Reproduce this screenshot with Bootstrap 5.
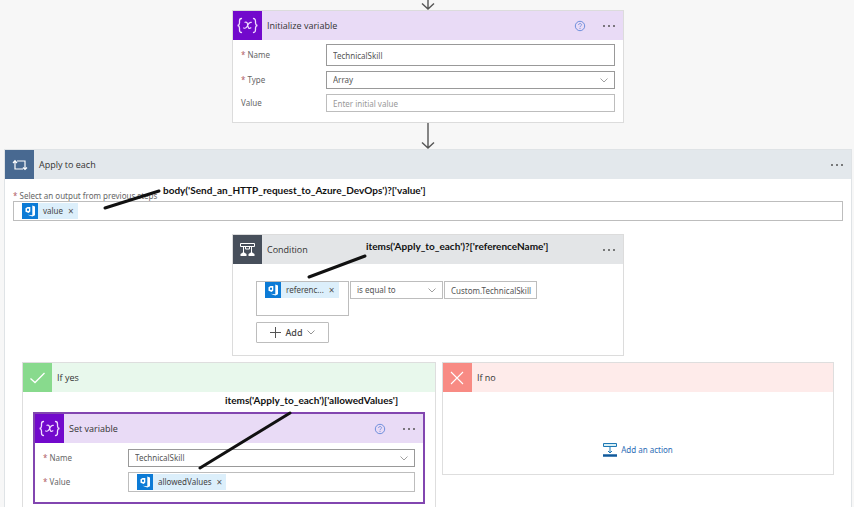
<!DOCTYPE html>
<html lang="en">
<head>
<meta charset="utf-8">
<meta name="viewport" content="width=device-width, initial-scale=1">
<title>Flow designer</title>
<link href="https://cdn.jsdelivr.net/npm/bootstrap@5.3.0/dist/css/bootstrap.min.css" rel="stylesheet">
<style>
body{background:#f7f7f7;font-family:"Noto Sans","Open Sans",sans-serif;font-size:8px;line-height:12px;color:#444;padding:0 2px 0 4px}
svg{display:block;flex:none}
.flow-card{width:100%;max-width:392px;background:#fff;border:1px solid #dcdcdc}
.flow-head{height:29px;font-family:"Open Sans","Noto Sans",sans-serif;font-size:9px;color:#333;padding-right:7px}
.flow-icon{width:29px;height:29px;margin-right:5px;display:flex;align-items:center;justify-content:center;flex:none;color:#fff}
.purple{background:#e9dbf6}.purple .flow-icon{background:#7209cc}
.scope-head{background:#e3e8ec}.scope-head .flow-icon{background:#486991}
.cond-head{background:#e3e5e7}.cond-head .flow-icon{background:#474f5b}
.yes-head{background:#e8f8ec}.yes-head .flow-icon{background:#88da8d}
.no-head{background:#feebea}.no-head .flow-icon{background:#f88b84}
.plain-btn{border:0;background:none;padding:0;color:#555}
.field-label{width:85px;flex:none;color:#666}
.req{color:#b06068}
.fields{display:flex;flex-direction:column;gap:5px;padding:4px 8px 10px}
.selected-card .fields{padding:6px 8px 10px}
.box{border:1px solid #bdbdbd;border-radius:0;background-color:#fff;font-size:8px;line-height:12px;color:#555;height:18px;padding:0 0 0 6px;min-width:0;width:100%}
.box::placeholder{color:#999;opacity:1}
.box.strong{border-color:#999}
.box.tall{height:22px}
select.box{appearance:none;background-image:url("data:image/svg+xml,%3Csvg xmlns='http://www.w3.org/2000/svg' viewBox='0 0 8 5'%3E%3Cpath d='M.5.5 4 4 7.5.5' fill='none' stroke='%23888' stroke-width='.8'/%3E%3C/svg%3E");background-repeat:no-repeat;background-size:8px 5px;background-position:right 6px center}
.token-box{display:flex;align-items:center;padding:0 0 0 8px;height:20px}
.token{display:flex;align-items:center;height:16px;background:#dceffb;color:#444;padding-right:4px;flex:none}
.token svg{margin-right:5px}
.token button{margin-left:5px;font-size:10px;line-height:12px}
.bare{border:0;outline:0;background:none;flex:1 1 0;min-width:0;width:0;padding:0}
.flow-scope{background:#fff;border:1px solid #dfe3e6;border-bottom:0}
.scope-body{padding:11px 8px 13px}
.scope-body label{line-height:11px;color:#666}
.cond-body{padding:17px 23px 12px}
.cond-row{display:flex;align-items:flex-start;gap:1px;margin-bottom:6px}
.cond-cell{width:93px;flex:none}
.cond-cell.token-box{height:35px;align-items:flex-start}
.add-btn{width:73px;height:21px;border:1px solid #bdbdbd;border-radius:1px;background:#fff;font-size:9px;font-weight:500;color:#444}
.branches{display:grid;grid-template-columns:415fr 393fr;gap:6px;padding:6px 17px 0}
.branch{border:1px solid #dedede;background:#fff}
.branch-yes{border-bottom:0;padding-bottom:3px}
.branch-no{height:113px}
.branch-space{padding:20px 10px 0}
.selected-card{max-width:none;border:2px solid #8246b0}
.note{position:absolute;font-family:Lato,"Open Sans",sans-serif;font-weight:700;font-size:10px;line-height:12px;color:#111;white-space:nowrap;z-index:2}
.note-line{position:absolute;z-index:2;pointer-events:none}
.note-source{left:158px;top:34px}.line-source{left:97px;top:37px}
.note-item{left:133px;top:5px}.line-item{left:73px;top:18px}
.note-allowed{left:190px;top:-20px}.line-allowed{left:162px;top:-4px}
.add-area{padding-top:34px}
.add-link{color:#2b6cb5;text-decoration:none}
</style>
<script src="https://cdn.jsdelivr.net/npm/bootstrap@5.3.0/dist/js/bootstrap.bundle.min.js"></script>
</head>
<body class="min-vh-100 d-flex flex-column">
<svg width="0" height="0" class="position-absolute" aria-hidden="true">
<symbol id="devops" viewBox="0 0 16 16"><path fill="#0c7bd6" d="M0 0h16v16H0z"/><path fill="#fff" d="M10.300 2.500 13 3.600v8.600l-2.700 1.300-4.800-1.700 4.800.400z"/><path d="M8.300 4v4.500L6.700 10 3.500 8.700V5.300L5.500 4z" fill="#fff"/><path d="M5 5.700h2v2H5z" fill="#0c7bd6"/></symbol>
<symbol id="dots" viewBox="0 0 14 4"><circle cx="2" cy="2" r="1"/><circle cx="7" cy="2" r="1"/><circle cx="12" cy="2" r="1"/></symbol>
<symbol id="help" viewBox="0 0 12 12"><circle cx="6" cy="6" r="4.700" fill="none" stroke="#6f8fdc"/><path d="M4.600 5c0-2 2.900-2 2.900-.2C7.500 5.900 6 5.900 6 7.200M6 8v1" fill="none" stroke="#6f8fdc" stroke-width=".9"/></symbol>
<symbol id="vari" viewBox="0 0 29 29"><path d="M8.500 7.500c-2 0-2 .8-2 2.500v2c0 1.500-.4 2.300-1.900 2.500 1.500.2 1.900 1 1.900 2.500v2c0 1.700 0 2.500 2 2.500M20.500 7.500c2 0 2 .8 2 2.500v2c0 1.500.4 2.300 1.900 2.500-1.500.2-1.900 1-1.900 2.500v2c0 1.700 0 2.500-2 2.500" fill="none" stroke="#f0ddff" stroke-width="1.300" stroke-linecap="round"/><path d="M12 11.300c2.200-.8 2.400 1.200 2.800 3.200s.9 4 3.100 2.300M18.300 11.400c-2-.7-3 1.500-3.700 3s-1.900 3.600-3.900 2.600" fill="none" stroke="#f0ddff" stroke-width="1.200" stroke-linecap="round"/></symbol>
</svg>

<svg class="mx-auto" width="14" height="10" viewBox="0 0 14 10" fill="none" stroke="#555" stroke-width="1.400" aria-hidden="true"><path d="M7 0v9M1 3.500 7 9l6-5.500"/></svg>

<section class="flow-card mx-auto">
  <header class="flow-head purple d-flex align-items-center">
    <span class="flow-icon"><svg width="29" height="29"><use href="#vari"/></svg></span><span class="flex-grow-1">Initialize variable</span>
    <button class="plain-btn me-3" aria-label="Help"><svg width="12" height="12"><use href="#help"/></svg></button>
    <button class="plain-btn" aria-label="More"><svg width="14" height="4" fill="currentColor"><use href="#dots"/></svg></button>
  </header>
  <div class="fields">
    <div class="d-flex align-items-center"><label class="field-label" for="n1"><span class="req">*</span> Name</label><input id="n1" class="box strong tall" value="TechnicalSkill"></div>
    <div class="d-flex align-items-center"><label class="field-label" for="t1"><span class="req">*</span> Type</label><select id="t1" class="box strong"><option>Array</option></select></div>
    <div class="d-flex align-items-center"><label class="field-label" for="v1">Value</label><input id="v1" class="box" placeholder="Enter initial value"></div>
  </div>
</section>

<svg class="mx-auto" width="14" height="26" viewBox="0 0 14 26" fill="none" stroke="#555" stroke-width="1.400" aria-hidden="true"><path d="M7 0v25M1 19.500 7 25l6-5.500"/></svg>

<main class="flow-scope flex-grow-1 d-flex flex-column position-relative">
  <header class="flow-head scope-head d-flex align-items-center">
    <span class="flow-icon"><svg width="16" height="14" viewBox="0 0 16 14" fill="none" stroke="#fff" stroke-width="1.200"><path d="M5 3h8v8M1 5l2-2.300L5 5M3 3v8h8M11 9.500l2 2 2-2"/></svg></span><span class="flex-grow-1">Apply to each</span>
    <button class="plain-btn" aria-label="More"><svg width="14" height="4" fill="currentColor"><use href="#dots"/></svg></button>
  </header>
  <span class="note note-source">body('Send_an_HTTP_request_to_Azure_DevOps')?['value']</span>
  <svg class="note-line line-source" width="60" height="24" aria-hidden="true"><path d="M3 21 57 4" stroke="#111" stroke-width="3" stroke-linecap="round"/></svg>
  <div class="scope-body">
    <label class="d-block" for="src"><span class="req">*</span> Select an output from previous steps</label>
    <div class="box token-box"><span class="token"><svg width="16" height="16"><use href="#devops"/></svg>value<button class="plain-btn" aria-label="Remove value">×</button></span><input id="src" class="bare"></div>
  </div>

  <section class="flow-card mx-auto position-relative">
    <header class="flow-head cond-head d-flex align-items-center">
      <span class="flow-icon"><svg width="17" height="17" viewBox="0 0 17 17" fill="none" stroke="#fff"><path d="M1.500 2.500h14v3h-14zM4.500 5.500v7M12.500 5.500v7M6.500 5.500v2.500h4V5.500"/><path d="M1.500 15v-2l3-2 3 2v2zM9.500 15v-2l3-2 3 2v2z" fill="#fff" stroke="none"/></svg></span><span class="flex-grow-1">Condition</span>
      <button class="plain-btn" aria-label="More"><svg width="14" height="4" fill="currentColor"><use href="#dots"/></svg></button>
    </header>
    <span class="note note-item">items('Apply_to_each')?['referenceName']</span>
    <svg class="note-line line-item" width="62" height="28" aria-hidden="true"><path d="M3 24 59 3" stroke="#111" stroke-width="3" stroke-linecap="round"/></svg>
    <div class="cond-body">
      <div class="cond-row">
        <div class="box cond-cell token-box"><span class="token"><svg width="16" height="16"><use href="#devops"/></svg>referenc...<button class="plain-btn" aria-label="Remove referenceName">×</button></span><input class="bare" aria-label="Left value"></div>
        <select class="box cond-cell" aria-label="Operator"><option>is equal to</option></select>
        <input class="box cond-cell" aria-label="Right value" value="Custom.TechnicalSkill">
      </div>
      <button class="add-btn d-flex align-items-center justify-content-center gap-1 p-0"><svg width="11" height="11" viewBox="0 0 11 11" stroke="#555"><path d="M5.500 0v11M0 5.500h11"/></svg>Add<svg width="8" height="5" viewBox="0 0 8 5" fill="none" stroke="#777" stroke-width=".8"><path d="M.5.5 4 4 7.500.5"/></svg></button>
    </div>
  </section>

  <div class="branches flex-grow-1">
    <section class="branch branch-yes">
      <header class="flow-head yes-head d-flex align-items-center"><span class="flow-icon"><svg width="17" height="14" viewBox="0 0 17 14" fill="none" stroke="#fff" stroke-width="1.300"><path d="m1.500 7.500 4.500 4L15.500 2"/></svg></span>If yes</header>
      <div class="branch-space">
        <section class="flow-card selected-card position-relative">
          <header class="flow-head purple d-flex align-items-center">
            <span class="flow-icon"><svg width="29" height="29"><use href="#vari"/></svg></span><span class="flex-grow-1">Set variable</span>
            <button class="plain-btn me-3" aria-label="Help"><svg width="12" height="12"><use href="#help"/></svg></button>
            <button class="plain-btn" aria-label="More"><svg width="14" height="4" fill="currentColor"><use href="#dots"/></svg></button>
          </header>
          <span class="note note-allowed">items('Apply_to_each')['allowedValues']</span>
          <svg class="note-line line-allowed" width="96" height="60" aria-hidden="true"><path d="M3 58 93 3" stroke="#111" stroke-width="3" stroke-linecap="round"/></svg>
          <div class="fields">
            <div class="d-flex align-items-center"><label class="field-label" for="n2"><span class="req">*</span> Name</label><select id="n2" class="box strong"><option>TechnicalSkill</option></select></div>
            <div class="d-flex align-items-center"><label class="field-label" for="v2"><span class="req">*</span> Value</label><div class="box token-box"><span class="token"><svg width="16" height="16"><use href="#devops"/></svg>allowedValues<button class="plain-btn" aria-label="Remove allowedValues">×</button></span><input id="v2" class="bare"></div></div>
          </div>
        </section>
      </div>
    </section>
    <section class="branch branch-no d-flex flex-column">
      <header class="flow-head no-head d-flex align-items-center"><span class="flow-icon"><svg width="14" height="14" viewBox="0 0 14 14" stroke="#fff" stroke-width="1.100"><path d="m1 1 12 12M13 1 1 13"/></svg></span>If no</header>
      <div class="add-area flex-grow-1 d-flex align-items-center justify-content-center">
        <a href="#" class="add-link d-flex align-items-center gap-1"><svg width="14" height="14" viewBox="0 0 14 14" fill="none" stroke="#1f78b4"><path d="M.5.5h13v3H.5z" fill="#d9f0f5"/><path d="M7 3.500V10M5 8l2 2 2-2"/><path d="M0 12.500h14" stroke="#105a9c" stroke-width="2.500"/></svg>Add an action</a>
      </div>
    </section>
  </div>
</main>
</body>
</html>
